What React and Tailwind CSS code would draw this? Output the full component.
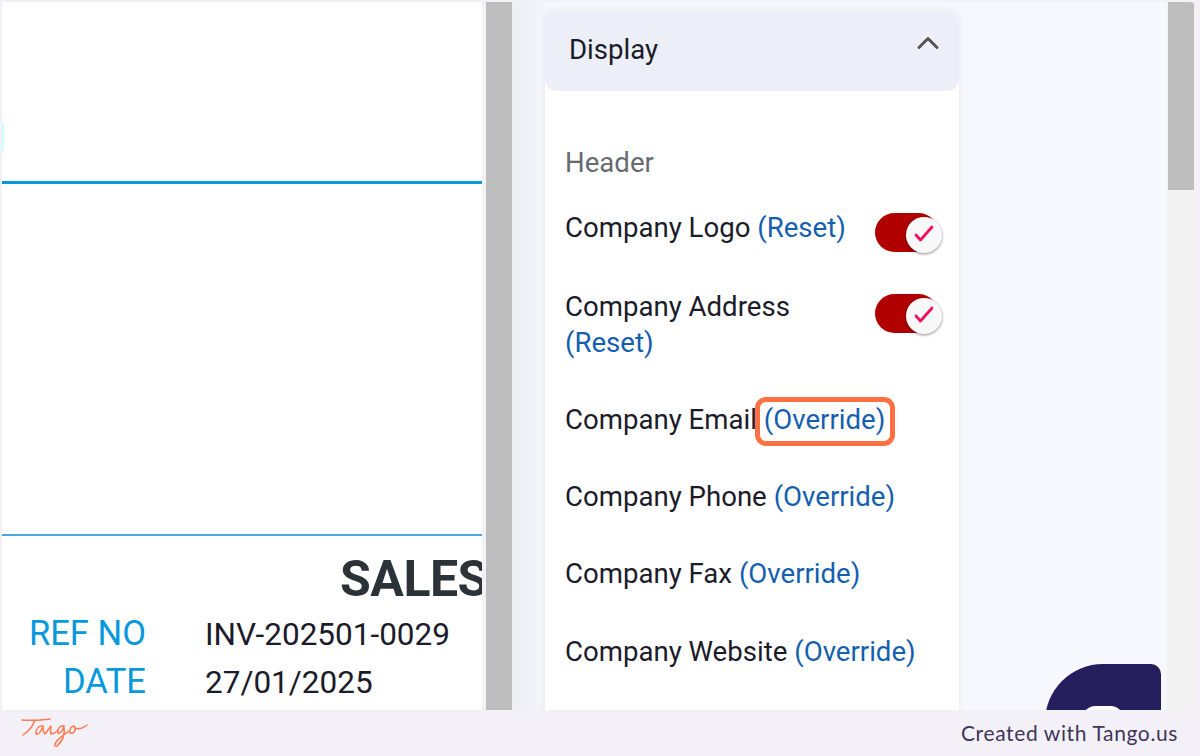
import { ChevronUp } from 'lucide-react';

const FONT = "font-['Roboto',sans-serif]";

function Toggle() {
  return (
    <div className="relative w-[67px] h-[40px] shrink-0">
      <div className="absolute left-0 top-0 w-[63px] h-[39px] rounded-full bg-[#b00000]" />
      <div className="absolute left-[31px] top-[4px] w-[36px] h-[36px] rounded-full bg-[#f8f8f8] shadow-[0_1px_3px_rgba(0,0,0,0.45)]">
        <svg width="36" height="36" viewBox="0 0 36 36" fill="none" stroke="#f0105f" strokeWidth="2.8" strokeLinecap="round" strokeLinejoin="round">
          <path d="M10 18l4.5 5L26 10" />
        </svg>
      </div>
    </div>
  );
}

function Row({ label, link, className }) {
  return (
    <div className={`text-[27.6px] leading-[36px] text-[#1b1b2a] whitespace-nowrap ${className}`}>
      {label} <span className="text-[#155fae]">({link})</span>
    </div>
  );
}

function Invoice() {
  return (
    <div className="w-[480px] bg-white shrink-0 overflow-hidden flex flex-col">
      <div className="h-[179px] shrink-0 pt-[120px]">
        <div className="w-[2px] h-[30px] bg-[#ccffff] rounded-r-full" />
      </div>
      <div className="h-[3px] bg-[#0898dc] shrink-0" />
      <div className="h-[350px] shrink-0" />
      <div className="h-[2px] bg-[#4aa9e0] shrink-0" />
      <div className="h-[58px] mt-[14px] pl-[338px] overflow-hidden whitespace-nowrap shrink-0">
        <span className="text-[50px] leading-[58px] font-bold tracking-[-0.5px] text-[#2b3238]">SALES</span>
      </div>
      <div className="flex leading-[48px] mt-[2px] ml-[26px]">
        <div className="w-[118px] -mt-[1px] text-right text-[#0898dc] text-[34.6px] whitespace-nowrap">
          <div>REF NO</div>
          <div>DATE</div>
        </div>
        <div className="ml-[59px] mt-[1px] text-[#1b1b2a] text-[31.5px] whitespace-nowrap">
          <div>INV-202501-0029</div>
          <div>27/01/2025</div>
        </div>
      </div>
    </div>
  );
}

function Sidebar() {
  return (
    <div className="flex-1 bg-[#f7f8fd] bg-gradient-to-r from-[#eceef4] to-[#f7f8fd] bg-[length:40px_100%] bg-no-repeat relative pl-[32px] pt-[8px] overflow-hidden">
      <div className="w-[414px] bg-white rounded-t-[12px] shadow-[0_0_6px_rgba(40,50,90,0.08)] h-[760px]">
        <div className="h-[81px] bg-[#eceff7] rounded-[12px] flex items-center justify-between pl-[24px] pr-[13px]">
          <span className="text-[27.6px] text-[#1b1b2a] pb-[2px]">Display</span>
          <ChevronUp size={36} strokeWidth={2} className="text-[#555] -mt-[15px]" />
        </div>
        <div className="pl-[20px] pr-[17px] pt-[54px]">
          <div className="text-[27.6px] leading-[36px] text-[#666b70]">Header</div>
          <div className="flex items-start justify-between mt-[29px]">
            <Row label="Company Logo" link="Reset" />
            <div className="mt-[3px]"><Toggle /></div>
          </div>
          <div className="flex items-start justify-between mt-[36px]">
            <span className="w-[260px] text-[27.6px] leading-[36px] text-[#1b1b2a]">Company Address <span className="text-[#155fae]">(Reset)</span></span>
            <div className="mt-[5px]"><Toggle /></div>
          </div>
          <div className="flex text-[27.6px] leading-[36px] text-[#1b1b2a] mt-[41px] whitespace-nowrap">
            <span>Company Email</span>
            <span className="relative ml-[7px] text-[#155fae]">
              (Override)
              <span className="absolute -left-[9px] -right-[10px] -top-[5px] -bottom-[8px] border-[5px] border-[#ff7043] rounded-[11px]" />
            </span>
          </div>
          <Row label="Company Phone" link="Override" className="mt-[41px]" />
          <Row label="Company Fax" link="Override" className="mt-[41px]" />
          <Row label="Company Website" link="Override" className="mt-[42px]" />
        </div>
      </div>
      <div className="absolute left-[532px] top-[662px] w-[116px] h-[60px] bg-[#241f5c] rounded-tl-[58px] rounded-tr-[10px]">
        <div className="absolute left-[38px] top-[42px] w-[40px] h-[20px] bg-white rounded-t-[12px]" />
      </div>
    </div>
  );
}

export default function App() {
  return (
    <div className={`w-[1200px] h-[756px] bg-[#f3f1f7] overflow-hidden flex flex-col ${FONT}`}>
      <div className="h-[710px] pt-[2px] pl-[2px] pr-[3px] flex shrink-0">
        <div className="flex-1 flex bg-[#f2f2f2] rounded-tr-[8px] overflow-hidden min-w-0">
          <Invoice />
          <div className="w-[4px] bg-[#f2f2f4] shrink-0" />
          <div className="w-[26px] bg-[#bdbdbd] shrink-0" />
          <div className="w-[1px] bg-[#f2f2f4] shrink-0" />
          <Sidebar />
          <div className="w-[30px] bg-[#f2f2f2] shrink-0">
            <div className="w-[26px] h-[188px] ml-[1px] bg-[#bdbdbd]" />
          </div>
        </div>
      </div>
      <div className="flex-1 flex items-center justify-between pl-[20px] pr-[22px]">
        <svg width="70" height="32" viewBox="0 0 70 32" fill="none" stroke="#ff7a50" strokeWidth="1.5" strokeLinecap="round" strokeLinejoin="round" aria-label="Tango">
          <path d="M2 3c9 1 18 0 28-1M15 3c-2 6-6 11-12 15" />
          <path d="M23 9c-4-1-8 4-7 8 3 1 6-4 7-8 0 3 0 6 2 8 2-2 4-6 6-8 0 2-1 5 0 8 3 0 5-2 7-4" />
          <path d="M44 9c-4-1-7 3-6 7 3 1 5-3 6-7 1 7-1 15-7 20-2 1-3-1-1-4 3-4 9-8 13-11" />
          <path d="M54 9c-3 0-5 4-4 7 4 1 7-3 4-7M55 11c4 2 8 0 12-3" />
        </svg>
        <span className="font-['Lato',sans-serif] text-[21px] tracking-[0.62px] text-[#40355a]">Created with Tango.us</span>
      </div>
    </div>
  );
}
